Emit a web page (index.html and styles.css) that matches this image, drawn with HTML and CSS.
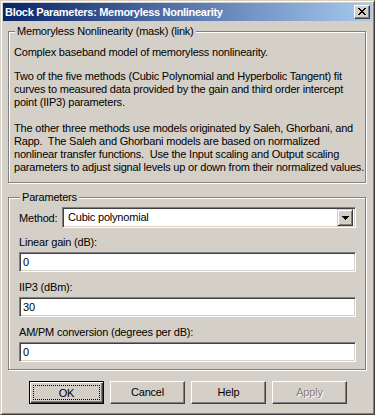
FILE: index.html
```html
<!DOCTYPE html>
<html>
<head>
<meta charset="utf-8">
<link rel="stylesheet" href="styles.css">
</head>
<body>
<div class="window">
  <div class="titlebar">
    <span class="title">Block Parameters: Memoryless Nonlinearity</span>
    <span class="close">
      <svg width="8" height="7" viewBox="0 0 8 7" shape-rendering="crispEdges">
        <rect x="0" y="0" width="2" height="1"/><rect x="6" y="0" width="2" height="1"/>
        <rect x="1" y="1" width="2" height="1"/><rect x="5" y="1" width="2" height="1"/>
        <rect x="2" y="2" width="4" height="1"/>
        <rect x="3" y="3" width="2" height="1"/>
        <rect x="2" y="4" width="4" height="1"/>
        <rect x="1" y="5" width="2" height="1"/><rect x="5" y="5" width="2" height="1"/>
        <rect x="0" y="6" width="2" height="1"/><rect x="6" y="6" width="2" height="1"/>
      </svg>
    </span>
  </div>
  <fieldset class="group desc">
    <legend>Memoryless Nonlinearity (mask) (link)</legend>
    <p class="p1">Complex baseband model of memoryless nonlinearity.</p>
    <p class="p2">Two of the five methods (Cubic Polynomial and Hyperbolic Tangent) fit<br>curves to measured data provided by the gain and third order intercept<br>point (IIP3) parameters.</p>
    <p class="p3">The other three methods use models originated by Saleh, Ghorbani, and<br>Rapp.&nbsp; The Saleh and Ghorbani models are based on normalized<br>nonlinear transfer functions.&nbsp; Use the Input scaling and Output scaling<br>parameters to adjust signal levels up or down from their normalized values.</p>
  </fieldset>
  <fieldset class="group params">
    <legend>Parameters</legend>
    <div class="method-row">
      <span class="method-label">Method:</span>
      <div class="combo">
        <span class="combo-text">Cubic polynomial</span>
        <span class="combo-btn">
          <svg width="7" height="4" viewBox="0 0 7 4" shape-rendering="crispEdges">
            <rect x="0" y="0" width="7" height="1"/><rect x="1" y="1" width="5" height="1"/>
            <rect x="2" y="2" width="3" height="1"/><rect x="3" y="3" width="1" height="1"/>
          </svg>
        </span>
      </div>
    </div>
    <div class="field">
      <div class="label">Linear gain (dB):</div>
      <div class="edit">0</div>
    </div>
    <div class="field">
      <div class="label">IIP3 (dBm):</div>
      <div class="edit">30</div>
    </div>
    <div class="field last">
      <div class="label">AM/PM conversion (degrees per dB):</div>
      <div class="edit">0</div>
    </div>
  </fieldset>
  <div class="buttons">
    <div class="btn default"><span class="focus">OK</span></div>
    <div class="btn"><span class="cap">Cancel</span></div>
    <div class="btn"><span class="cap">Help</span></div>
    <div class="btn disabled"><span class="cap">Apply</span></div>
  </div>
</div>
</body>
</html>
```

FILE: styles.css
```css
* { box-sizing: border-box; }
html, body { margin: 0; padding: 0; }
body {
  background: #D4D0C8;
  font-family: "Liberation Sans", Arial, sans-serif;
  font-size: 11px;
  letter-spacing: -0.2px;
  color: #000;
}
.window {
  width: 375px;
  height: 415px;
  background: #D4D0C8;
  border: 1px solid;
  border-color: #D4D0C8 #404040 #404040 #D4D0C8;
  box-shadow: inset 1px 1px #FFFFFF, inset -1px -1px #808080;
  padding: 2px;
  display: flex;
  flex-direction: column;
}
.titlebar {
  height: 18px;
  background: linear-gradient(to right, #0A246A, #A6CAF0);
  display: flex;
  align-items: center;
  justify-content: space-between;
  padding: 0 2px 0 2px;
  flex: none;
}
.title {
  color: #fff;
  font-weight: bold;
  font-size: 11px;
  letter-spacing: -0.3px;
  line-height: 13px;
  white-space: nowrap;
}
.close {
  width: 16px;
  height: 14px;
  background: #D4D0C8;
  border: 1px solid;
  border-color: #FFFFFF #404040 #404040 #FFFFFF;
  box-shadow: inset -1px -1px #808080;
  display: flex;
  align-items: center;
  justify-content: center;
  padding: 0 1px 1px 0;
}
.close svg { display: block; fill: #000; }

.group {
  border: 1px solid #808080;
  box-shadow: inset 1px 1px #FFFFFF, 1px 1px #FFFFFF;
  min-width: 0;
  flex: none;
}
.group legend {
  padding: 0 2px;
  margin-left: 1px;
  line-height: 13px;
  background: #D4D0C8;
  white-space: nowrap;
}
.desc {
  margin: 4px 6px 0 5px;
  padding: 8px 5px 8px 5px;
}
.desc p {
  margin: 0;
  line-height: 13px;
  white-space: nowrap;
}
.desc .p1 { margin-bottom: 11px; }
.desc .p2 { margin-bottom: 13px; }

.params {
  margin: 8px 6px 0 5px;
  padding: 3px 9px 7px 10px;
}
.method-row {
  display: flex;
  align-items: center;
  height: 21px;
}
.method-label {
  width: 43px;
  flex: none;
}
.combo {
  width: 294px;
  height: 21px;
  background: #fff;
  border: 1px solid;
  border-color: #808080 #FFFFFF #FFFFFF #808080;
  box-shadow: inset 1px 1px #404040, inset -1px -1px #D4D0C8;
  padding: 2px;
  display: flex;
  align-items: center;
  justify-content: space-between;
}
.combo-text { padding-left: 3px; line-height: 13px; }
.combo-btn {
  width: 16px;
  height: 17px;
  background: #D4D0C8;
  border: 1px solid;
  border-color: #D4D0C8 #404040 #404040 #D4D0C8;
  box-shadow: inset 1px 1px #FFFFFF, inset -1px -1px #808080;
  display: flex;
  align-items: center;
  justify-content: center;
}
.combo-btn svg { display: block; fill: #000; }

.field { margin-top: 8px; }
.field + .field { margin-top: 9px; }
.label { line-height: 13px; height: 13px; margin-bottom: 3px; white-space: nowrap; }
.edit {
  height: 20px;
  width: 337px;
  background: #fff;
  border: 1px solid;
  border-color: #808080 #FFFFFF #FFFFFF #808080;
  box-shadow: inset 1px 1px #404040, inset -1px -1px #D4D0C8;
  padding: 0 3px;
  line-height: 18px;
}

.buttons {
  display: flex;
  gap: 6px;
  margin: 11px 0 0 26px;
}
.btn {
  width: 75px;
  height: 23px;
  background: #D4D0C8;
  border: 1px solid;
  border-color: #FFFFFF #404040 #404040 #FFFFFF;
  box-shadow: inset -1px -1px #808080;
  display: flex;
  align-items: center;
  justify-content: center;
  padding: 3px;
}
.btn .cap { line-height: 13px; }
.btn.default {
  border-color: #000;
  box-shadow: inset 1px 1px #FFFFFF, inset -1px -1px #404040, inset -2px -2px #808080;
}
.btn .focus {
  flex: 1;
  align-self: stretch;
  border: 1px dotted #000;
  display: flex;
  align-items: center;
  justify-content: center;
}
.btn.disabled .cap {
  color: #808080;
  text-shadow: 1px 1px #FFFFFF;
}
```
